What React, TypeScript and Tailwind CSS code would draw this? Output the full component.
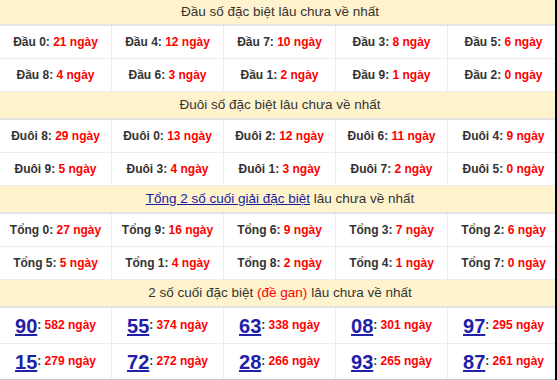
type Item = { label: string; days: number };

const dau: Item[][] = [
  [
    { label: "Đầu 0", days: 21 },
    { label: "Đầu 4", days: 12 },
    { label: "Đầu 7", days: 10 },
    { label: "Đầu 3", days: 8 },
    { label: "Đầu 5", days: 6 },
  ],
  [
    { label: "Đầu 8", days: 4 },
    { label: "Đầu 6", days: 3 },
    { label: "Đầu 1", days: 2 },
    { label: "Đầu 9", days: 1 },
    { label: "Đầu 2", days: 0 },
  ],
];

const duoi: Item[][] = [
  [
    { label: "Đuôi 8", days: 29 },
    { label: "Đuôi 0", days: 13 },
    { label: "Đuôi 2", days: 12 },
    { label: "Đuôi 6", days: 11 },
    { label: "Đuôi 4", days: 9 },
  ],
  [
    { label: "Đuôi 9", days: 5 },
    { label: "Đuôi 3", days: 4 },
    { label: "Đuôi 1", days: 3 },
    { label: "Đuôi 7", days: 2 },
    { label: "Đuôi 5", days: 0 },
  ],
];

const tong: Item[][] = [
  [
    { label: "Tổng 0", days: 27 },
    { label: "Tổng 9", days: 16 },
    { label: "Tổng 6", days: 9 },
    { label: "Tổng 3", days: 7 },
    { label: "Tổng 2", days: 6 },
  ],
  [
    { label: "Tổng 5", days: 5 },
    { label: "Tổng 1", days: 4 },
    { label: "Tổng 8", days: 2 },
    { label: "Tổng 4", days: 1 },
    { label: "Tổng 7", days: 0 },
  ],
];

const gan: Item[][] = [
  [
    { label: "90", days: 582 },
    { label: "55", days: 374 },
    { label: "63", days: 338 },
    { label: "08", days: 301 },
    { label: "97", days: 295 },
  ],
  [
    { label: "15", days: 279 },
    { label: "72", days: 272 },
    { label: "28", days: 266 },
    { label: "93", days: 265 },
    { label: "87", days: 261 },
  ],
];

function Header({ children, first }: { children: React.ReactNode; first?: boolean }) {
  return (
    <div
      className={`${first ? "h-[24px]" : "h-[26px]"} bg-[#fff3cd] border-b-2 border-[#e4e4e4] flex items-center justify-center text-[13.5px] text-[#333] box-content`}
    >
      {children}
    </div>
  );
}

function Rows({ rows }: { rows: Item[][] }) {
  return (
    <>
      {rows.map((row, i) => (
        <div key={i} className="grid grid-cols-5 h-[33px] border-b border-[#ececec]">
          {row.map((it) => (
            <div
              key={it.label}
              className="flex items-center justify-center border-r border-[#ececec] text-[12px] font-bold"
            >
              <span className="text-[#333]">{it.label}:&nbsp;</span>
              <span className="text-[#ff0000]">{it.days} ngày</span>
            </div>
          ))}
        </div>
      ))}
    </>
  );
}

export default function App() {
  return (
    <div className="w-[557px] h-[380px] overflow-hidden bg-white border-r-2 border-black font-['Liberation_Sans',Arial,sans-serif]">
      <div className="w-[560px]">
        <Header first>Đầu số đặc biệt lâu chưa về nhất</Header>
        <Rows rows={dau} />

        <Header>Đuôi số đặc biệt lâu chưa về nhất</Header>
        <Rows rows={duoi} />

        <Header>
          <a href="#" className="text-[#1a1aa6] underline">
            Tổng 2 số cuối giải đặc biệt
          </a>
          &nbsp;lâu chưa về nhất
        </Header>
        <Rows rows={tong} />

        <Header>
          2 số cuối đặc biệt&nbsp;<span className="text-[#ff0000]">(đề gan)</span>&nbsp;lâu chưa về nhất
        </Header>
        {gan.map((row, i) => (
          <div
            key={i}
            className={`grid grid-cols-5 h-[36px] border-b ${i === 1 ? "border-[#c8c8c8]" : "border-[#ececec]"}`}
          >
            {row.map((it) => (
              <div
                key={it.label}
                className="flex items-center justify-center border-r border-[#ececec] font-bold"
              >
                <a href="#" className="text-[20px] text-[#2020a8] underline leading-none">
                  {it.label}
                </a>
                <span className="text-[12px] text-[#333] self-end mb-[9px]">:&nbsp;</span>
                <span className="text-[12px] text-[#ff0000] self-end mb-[9px]">{it.days} ngày</span>
              </div>
            ))}
          </div>
        ))}
      </div>
    </div>
  );
}
